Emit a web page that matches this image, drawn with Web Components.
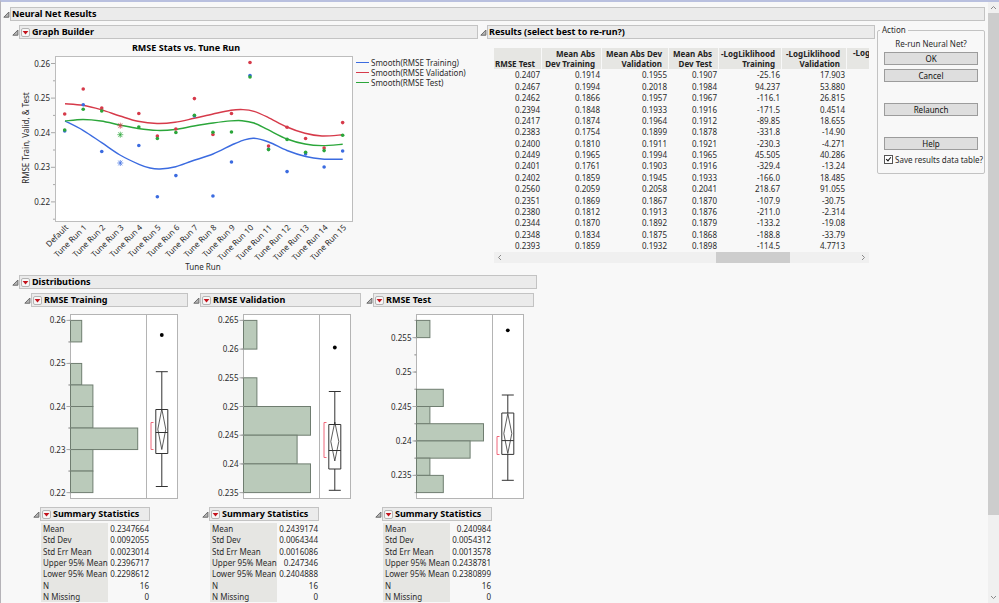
<!DOCTYPE html>
<html lang="en">
<head>
<meta charset="utf-8">
<title>Neural Net Results</title>
<style>
html, body { margin: 0; height: 100%; }
body {
  --ink: #2b2b2b; --line: #c3c3c3; --bar: #ebebeb; --head: #e6e6e3; --page: #f8f8f8;
  font: 8px/11px "Noto Sans", "Open Sans", sans-serif; color: var(--ink); background: var(--page);
  overflow: hidden;
}
</style>
</head>
<body>
<report-window>
  <outline-node label="Neural Net Results" plain>
    <top-row>
      <outline-node label="Graph Builder"><graph-builder></graph-builder></outline-node>
      <outline-node label="Results (select best to re-run?)" plain><results-table></results-table></outline-node>
      <action-panel></action-panel>
    </top-row>
    <distribution-group></distribution-group>
  </outline-node>
</report-window>

<script>
const mount = (el, html) => { el.attachShadow({ mode: 'open' }).innerHTML = html; };

class ReportWindow extends HTMLElement {
  connectedCallback() {
    mount(this, `<style>
      :host { display: flex; height: 100vh; box-sizing: border-box; border-top: 2px solid #b9c0df; border-left: 1px solid #b5b3b8; }
      main { flex: 1; min-width: 0; overflow: hidden; padding: 5px 3px 0 2px; }
      aside { width: 11px; background: #f0f0f0; display: flex; flex-direction: column; }
      button { all: unset; height: 11px; display: grid; place-items: center; }
      i { flex: 502; background: #cdcdcd; }
      span { flex: 77; }
      path { fill: none; stroke: #8a8a8a; }
    </style>
    <main><slot></slot></main>
    <aside>
      <button aria-label="Scroll up"><svg width="7" height="5"><path d="M1 4L3.5 1.5L6 4"/></svg></button>
      <i></i><span></span>
      <button aria-label="Scroll down"><svg width="7" height="5"><path d="M1 1L3.5 3.5L6 1"/></svg></button>
    </aside>`);
  }
}

class TopRow extends HTMLElement {
  connectedCallback() {
    mount(this, `<style>
      :host { display: grid; grid-template-columns: 466fr 395fr 108px; column-gap: 2px; align-items: start; margin-left: 9px; }
    </style><slot></slot>`);
  }
}

class OutlineNode extends HTMLElement {
  connectedCallback() {
    const menu = this.hasAttribute('plain') ? '' :
      `<button class="menu" aria-label="${this.getAttribute('label')} menu"><svg width="9" height="9"><rect x=".5" y=".5" width="8" height="8" rx="1.5" fill="#f6f6f6" stroke="#b4b4b4"/><path d="M1.6 3h5.8L4.5 6.4z" fill="#c4121c"/></svg></button>`;
    mount(this, `<style>
      :host { display: block; min-width: 0; }
      header { display: flex; align-items: center; height: 14px; margin-bottom: 4px; }
      :host([tight]) header { margin-bottom: 2px; }
      button { all: unset; display: block; height: 9px; }
      .tri { width: 7px; height: 7px; }
      svg { display: block; }
      .bar { flex: 1; min-width: 0; box-sizing: border-box; height: 14px; display: flex; align-items: center; gap: 2px; padding-left: 1px; background: var(--bar); border: 1px solid var(--line); }
      h2 { margin: 0; font-size: 9px; line-height: 12px; font-weight: 700; color: #000; white-space: nowrap; }
    </style>
    <header>
      <button class="tri" aria-label="Toggle ${this.getAttribute('label')}"><svg width="7" height="7"><path d="M.8 6.2H5.9V1z" fill="#b5b5b5" stroke="#6b6b6b"/></svg></button>
      <div class="bar">${menu}<h2>${this.getAttribute('label')}</h2></div>
    </header><slot></slot>`);
  }
}

const smooth = pts => {
  let d = `M${pts[0]}`;
  for (let i = 0; i < pts.length - 1; i++) {
    const a = pts[i - 1] || pts[i], b = pts[i], c = pts[i + 1], e = pts[i + 2] || c;
    d += `C${b[0] + (c[0] - a[0]) / 6} ${b[1] + (c[1] - a[1]) / 6} ${c[0] - (e[0] - b[0]) / 6} ${c[1] - (e[1] - b[1]) / 6} ${c}`;
  }
  return d;
};

class GraphBuilder extends HTMLElement {
  connectedCallback() {
    const X = i => 64.7 + i * 18.53;
    const series = [
      { name: 'Training', color: '#3b6be0',
        dots: [131, 104.7, 151.5, 163, 145.5, 196.7, 175.6, 116, 196, 162, 75.5, 149, 171.6, 154, 167, 151],
        line: [[65,121],[83,130.3],[101.7,142.7],[120,155],[139,164.3],[150,168],[160,169],[175.7,166.7],[192,161],[213,154],[231.7,145],[243,140.3],[254,138.3],[268.7,142],[287,150.5],[305.7,156.5],[322,159],[342.7,159.3]] },
      { name: 'Validation', color: '#d63a4a',
        dots: [114, 89, 108, 125.7, 113.5, 136, 129, 98.6, 134.5, 113.5, 62.5, 146, 127.3, 138.5, 148, 122.6],
        line: [[65,103.7],[83,105.3],[101,109.7],[120,116],[138,121.3],[157,123.5],[175,122.3],[194,118.3],[213,114],[231,110.3],[243,109.6],[254,111.3],[268,117.3],[287,127],[305,133.3],[322,136],[342.7,134.8]] },
      { name: 'Test', color: '#2ba63a',
        dots: [130, 109.3, 111, 134.7, 127, 138.5, 132.5, 115.3, 132.3, 132, 77, 149.6, 139.4, 152.3, 150.6, 135.3],
        line: [[65,121],[83,119.5],[101,121],[120,125],[138,128.5],[157,130.4],[175,129.5],[194,126],[213,123],[231,120.9],[242,120.7],[254,123],[268,129.7],[287,139],[305,144],[322,145.6],[342.7,144.3]] }
    ];
    const star = (x, y, c) => `<path d="M${x - 3} ${y}h6M${x - 2} ${y - 2.4}l4 4.8M${x + 2} ${y - 2.4}l-4 4.8M${x} ${y - 3}v6" stroke="${c}" stroke-width=".7"/>`;
    const curves = series.map(s => `<path d="${smooth(s.line)}" fill="none" stroke="${s.color}" stroke-width="1.4"/>`).join('');
    const dots = series.map(s => s.dots.map((y, i) => i === 3 ? star(X(i), y, s.color) : `<circle cx="${X(i)}" cy="${y}" r="1.8" fill="${s.color}"/>`).join('')).join('');
    let axis = '';
    for (let i = 0; i < 5; i++) {
      const y = 63.5 + i * 34.6;
      axis += `<text x="50" y="${y + 3}" text-anchor="end">${(0.26 - i / 100).toFixed(2)}</text><path d="M51 ${y}h4M53 ${y + 17.3}h2" stroke="#a8a8a8"/>`;
    }
    const names = ['Default', ...Array.from({ length: 15 }, (_, i) => `Tune Run ${i + 1}`)]
      .map((t, i) => `<text transform="translate(${X(i) + 4} 228) rotate(-45)" text-anchor="end">${t}</text>`).join('');
    mount(this, `<style>
      :host { display: flex; align-items: flex-start; margin-top: -3px; }
      svg { display: block; flex: none; }
      svg text { font-size: 8px; fill: var(--ink); }
      svg .title { font-size: 9px; font-weight: 700; fill: #000; }
      ul { list-style: none; margin: 17px 0 0; padding: 0; }
      li { display: flex; align-items: center; gap: 2px; height: 10px; white-space: nowrap; }
      li::before { content: ""; width: 13px; height: 1px; background: var(--c); }
    </style>
    <svg width="344" height="232" viewBox="12 40 344 232" role="img" aria-label="RMSE Stats vs. Tune Run">
      <text class="title" x="186" y="51" text-anchor="middle">RMSE Stats vs. Tune Run</text>
      <rect x="55.5" y="56.5" width="297" height="165" fill="#fff" stroke="#bdbdbd"/>
      ${axis}${curves}${dots}${names}
      <text x="203" y="270" text-anchor="middle">Tune Run</text>
      <text transform="translate(29 138) rotate(-90)" text-anchor="middle">RMSE Train, Valid, &amp; Test</text>
    </svg>
    <ul>${series.map(s => `<li style="--c:${s.color}">Smooth(RMSE ${s.name})</li>`).join('')}</ul>`);
  }
}

class ResultsTable extends HTMLElement {
  connectedCallback() {
    const heads = [['', 'RMSE Test', 48], ['Mean Abs', 'Dev Training', 60], ['Mean Abs Dev', 'Validation', 67], ['Mean Abs', 'Dev Test', 50], ['-LogLiklihood', 'Training', 63], ['-LogLiklihood', 'Validation', 65], ['-LogLiklihood', '', 65]];
    const rows = `0.2407 0.1914 0.1955 0.1907 -25.16 17.903
0.2467 0.1994 0.2018 0.1984 94.237 53.880
0.2462 0.1866 0.1957 0.1967 -116.1 26.815
0.2394 0.1848 0.1933 0.1916 -171.5 0.4514
0.2417 0.1874 0.1964 0.1912 -89.85 18.655
0.2383 0.1754 0.1899 0.1878 -331.8 -14.90
0.2400 0.1810 0.1911 0.1921 -230.3 -4.271
0.2449 0.1965 0.1994 0.1965 45.505 40.286
0.2401 0.1761 0.1903 0.1916 -329.4 -13.24
0.2402 0.1859 0.1945 0.1933 -166.0 18.485
0.2560 0.2059 0.2058 0.2041 218.67 91.055
0.2351 0.1869 0.1867 0.1870 -107.9 -30.75
0.2380 0.1812 0.1913 0.1876 -211.0 -2.314
0.2344 0.1870 0.1892 0.1879 -133.2 -19.08
0.2348 0.1834 0.1875 0.1868 -188.8 -33.79
0.2393 0.1859 0.1932 0.1898 -114.5 4.7713`.split('\n').map(r => r.split(' '));
    mount(this, `<style>
      :host { display: block; margin: 9px 6px 0 14px; }
      .view { overflow: hidden; }
      table { table-layout: fixed; width: 418px; border-collapse: separate; border-spacing: 0; }
      tbody { height: 182px; }
      th { height: 21px; padding: 0 6px 0 0; background: var(--head); border-right: 1px solid var(--page); color: #222; font-weight: 700; text-align: right; line-height: 10px; white-space: nowrap; vertical-align: bottom; }
      th:last-child { text-align: left; padding: 0 0 0 6px; vertical-align: top; }
      td { padding: 0 2px 0 0; text-align: right; line-height: 11px; vertical-align: bottom; }
      .rail { display: flex; align-items: stretch; height: 11px; margin-top: 1px; background: #f0f0f0; }
      .rail button { all: unset; width: 11px; display: grid; place-items: center; }
      .rail i { flex: 74; background: #cdcdcd; }
      .before { flex: 210; } .after { flex: 68; }
      path { fill: none; stroke: #8a8a8a; }
    </style>
    <div class="view"><table>
      <colgroup>${heads.map(h => `<col style="width:${h[2]}px">`).join('')}</colgroup>
      <thead><tr>${heads.map(h => `<th scope="col">${h[0]}${h[0] && h[1] ? '<br>' : ''}${h[1]}</th>`).join('')}</tr></thead>
      <tbody>${rows.map(r => `<tr>${r.map(v => `<td>${v}</td>`).join('')}<td></td></tr>`).join('')}</tbody>
    </table></div>
    <div class="rail">
      <button aria-label="Scroll left"><svg width="5" height="7"><path d="M4 1L1.5 3.5L4 6"/></svg></button>
      <span class="before"></span><i></i><span class="after"></span>
      <button aria-label="Scroll right"><svg width="5" height="7"><path d="M1 1L3.5 3.5L1 6"/></svg></button>
    </div>`);
  }
}

class ActionPanel extends HTMLElement {
  connectedCallback() {
    mount(this, `<style>
      :host { display: block; }
      fieldset { margin: 0; padding: 2px 6px 9px; border: 1px solid var(--line); border-radius: 2px; min-width: 0; display: flex; flex-direction: column; }
      legend { padding: 0 2px; margin-left: -4px; line-height: 10px; }
      p { margin: 2px 0 3px; text-align: center; line-height: 10px; }
      button { font: inherit; line-height: 10px; color: #111; height: 13px; padding: 0; margin-bottom: 4px; background: #dedede; border: 1px solid #9c9c9c; border-radius: 0; }
      .apart { margin-top: 17px; }
      label { display: flex; align-items: center; gap: 2px; white-space: nowrap; height: 10px; }
      input { appearance: none; flex: none; box-sizing: border-box; width: 9px; height: 9px; margin: 0; border: 1px solid #555; background: #fff; position: relative; }
      input:checked::after { content: ""; position: absolute; left: 2px; top: 0; width: 2px; height: 4px; border: solid #111; border-width: 0 1px 1px 0; transform: rotate(40deg); }
    </style>
    <fieldset><legend>Action</legend>
      <p>Re-run Neural Net?</p>
      <button>OK</button><button>Cancel</button>
      <button class="apart">Relaunch</button>
      <button class="apart">Help</button>
      <label><input type="checkbox" checked>Save results data table?</label>
    </fieldset>`);
  }
}

const DISTS = {
  Training: { axis: 46, top: 0.26, bottom: 0.22, bin: 0.005, unit: 11.2, major: [0.26, 0.25, 0.24, 0.23, 0.22],
    bars: [1, 0, 1, 2, 2, 6, 2, 2], box: [335, 371.7, 409.5, 432.5, 453.5, 486.5], diamond: [409, 449.5], bracket: [422.5, 449.5],
    stats: ['0.2347664', '0.0092055', '0.0023014', '0.2396717', '0.2298612', '16', '0'] },
  Validation: { axis: 50, top: 0.265, bottom: 0.235, bin: 0.005, unit: 13.4, major: [0.265, 0.26, 0.255, 0.25, 0.245, 0.24, 0.235],
    bars: [1, 0, 1, 5, 4, 5], box: [347.5, 391.5, 424.5, 450.5, 469, 490.3], diamond: [422, 461], bracket: [422.5, 457.5],
    stats: ['0.2439174', '0.0064344', '0.0016086', '0.247346', '0.2404888', '16', '0'] },
  Test: { axis: 50, top: 0.2575, bottom: 0.2325, bin: 0.0025, unit: 13.4, major: [0.255, 0.25, 0.245, 0.24, 0.235],
    bars: [1, 0, 0, 0, 2, 1, 5, 4, 1, 2], box: [330.3, 395, 413, 440.6, 454.4, 480.3], diamond: [413.5, 453.5], bracket: [436.5, 454.5],
    stats: ['0.240984', '0.0054312', '0.0013578', '0.2438781', '0.2380899', '16', '0'] }
};

class DistPlot extends HTMLElement {
  connectedCallback() {
    const d = DISTS[this.getAttribute('of')], L = d.axis + .5;
    const Y = v => 320.4 + (d.top - v) / (d.top - d.bottom) * 172.2;
    let s = '';
    d.bars.forEach((n, i) => {
      const y0 = Y(d.top - i * d.bin), y1 = Y(d.top - (i + 1) * d.bin);
      s += `<path d="M${L - 2} ${y0}h2M${L - 2} ${y1}h2" stroke="#a8a8a8"/>`;
      if (n) s += `<rect x="${L}" y="${y0}" width="${n * d.unit}" height="${y1 - y0}" fill="#bacaba" stroke="#6f7d70"/>`;
    });
    d.major.forEach(v => { s += `<path d="M${L - 4} ${Y(v)}h4" stroke="#a8a8a8"/><text x="${L - 5}" y="${Y(v) + 3}" text-anchor="end">${v}</text>`; });
    const c = L + 91.3, [out, hi, q3, med, q1, lo] = d.box, [dt, db] = d.diamond, dm = (dt + db) / 2, [b0, b1] = d.bracket;
    s += `<circle cx="${c}" cy="${out}" r="1.9" fill="#000"/>
      <path d="M${c - 6} ${hi}h12M${c} ${hi}V${q3}M${c} ${q1}V${lo}M${c - 6} ${lo}h12M${c - 6} ${q3}h12V${q1}h-12zM${c - 6} ${med}h12" fill="none" stroke="#333"/>
      <path d="M${c} ${dt}L${c + 4} ${dm}L${c} ${db}L${c - 4} ${dm}z" fill="none" stroke="#333" stroke-width=".8"/>
      <path d="M${c - 8.3} ${b0}h-2.5V${b1}h2.5" fill="none" stroke="#f0677a"/>`;
    mount(this, `<style>:host { display: block; margin-top: 5px; } svg { display: block; } text { font-size: 8px; fill: var(--ink); }</style>
    <svg width="${d.axis + 109}" height="190" viewBox="0 312 ${d.axis + 109} 190" role="img" aria-label="RMSE ${this.getAttribute('of')} distribution">
      <rect x="${L}" y="314.5" width="107" height="184" fill="#fff" stroke="#b4b4b4"/>
      <path d="M${L + 76} 314.5v184" stroke="#b4b4b4"/>${s}
    </svg>`);
  }
}

class SummaryTable extends HTMLElement {
  connectedCallback() {
    const names = ['Mean', 'Std Dev', 'Std Err Mean', 'Upper 95% Mean', 'Lower 95% Mean', 'N', 'N Missing'];
    const v = DISTS[this.getAttribute('of')].stats;
    mount(this, `<style>
      :host { display: block; margin-left: 8px; }
      table { border-spacing: 0; width: 109px; height: 79px; }
      th { width: 64px; padding: 0 0 0 2px; background: var(--head); font-weight: 400; text-align: left; white-space: nowrap; line-height: 11px; }
      td { padding: 0 1px 0 0; text-align: right; line-height: 11px; }
    </style><table>${names.map((n, i) => `<tr><th scope="row">${n}</th><td>${v[i]}</td></tr>`).join('')}</table>`);
  }
}

class DistributionGroup extends HTMLElement {
  connectedCallback() {
    mount(this, `<style>
      :host { display: block; width: 525px; max-width: 100%; margin: 3px 0 0 9px; }
      .cols { display: grid; grid-template-columns: 164px 168px 168px; gap: 5px; margin-left: 12px; }
      .sum { display: block; width: 117px; margin: 5px 0 0 9px; }
    </style>
    <outline-node label="Distributions"><div class="cols">
      ${Object.keys(DISTS).map(k => `<outline-node label="RMSE ${k}">
        <dist-plot of="${k}"></dist-plot>
        <outline-node class="sum" tight label="Summary Statistics"><summary-table of="${k}"></summary-table></outline-node>
      </outline-node>`).join('')}
    </div></outline-node>`);
  }
}

Object.entries({
  'report-window': ReportWindow, 'top-row': TopRow, 'outline-node': OutlineNode, 'graph-builder': GraphBuilder,
  'results-table': ResultsTable, 'action-panel': ActionPanel, 'dist-plot': DistPlot, 'summary-table': SummaryTable,
  'distribution-group': DistributionGroup
}).forEach(([n, c]) => customElements.define(n, c));
</script>
</body>
</html>
